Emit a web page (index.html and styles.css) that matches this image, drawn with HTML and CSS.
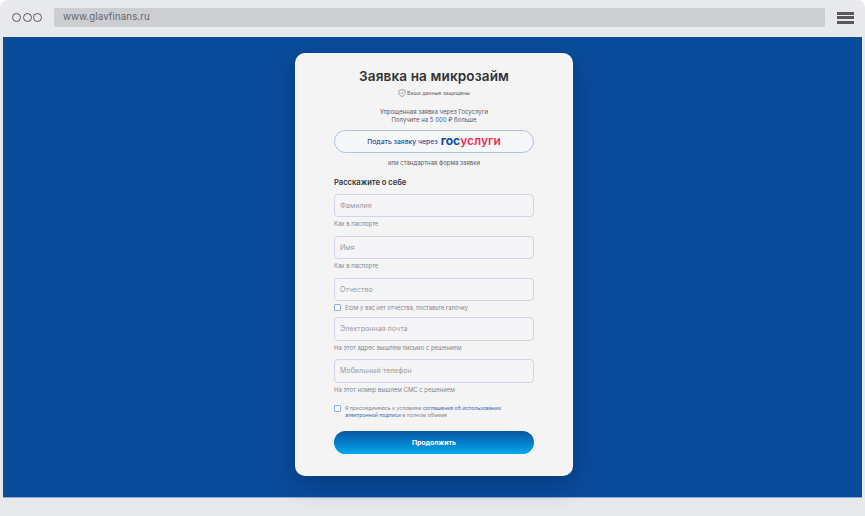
FILE: index.html
```html
<!DOCTYPE html>
<html lang="ru">
<head>
<meta charset="utf-8">
<title>Заявка на микрозайм</title>
<link rel="stylesheet" href="styles.css">
</head>
<body>
<div class="browser">
  <header class="toolbar">
    <div class="dots"><i></i><i></i><i></i></div>
    <div class="url">www.glavfinans.ru</div>
    <div class="burger"><i></i><i></i><i></i></div>
  </header>
  <main class="stage">
    <form class="card">
      <h1 class="title">Заявка на микрозайм</h1>
      <p class="secure">
        <svg class="shield" viewBox="0 0 10 10" width="8" height="8"><path d="M5 .7 8.900 2v3c0 2.300-1.700 3.600-3.900 4.400C2.800 8.600 1.100 7.300 1.100 5V2z" fill="none" stroke="#777" stroke-width=".8"/><path d="M3.400 5 4.600 6.200 6.800 3.800" fill="none" stroke="#777" stroke-width=".8"/></svg>
        Ваши данные защищены
      </p>
      <p class="promo">Упрощенная заявка через Госуслуги<br>Получите на <span class="accent">5 000 ₽</span> больше</p>
      <button class="gos" type="button">Подать заявку через <span class="logo"><span class="g1">гос</span><span class="g2">услуги</span></span></button>
      <p class="or">или стандартная форма заявки</p>
      <h2 class="section">Расскажите о себе</h2>
      <div class="field">Фамилия</div>
      <p class="hint">Как в паспорте</p>
      <div class="field">Имя</div>
      <p class="hint">Как в паспорте</p>
      <div class="field">Отчество</div>
      <label class="check first"><i class="box"></i><span>Если у вас нет отчества, поставьте галочку</span></label>
      <div class="field tall">Электронная почта</div>
      <p class="hint short">На этот адрес вышлем письмо с решением</p>
      <div class="field tall">Мобильный телефон</div>
      <p class="hint short">На этот номер вышлем СМС с решением</p>
      <label class="check agree"><i class="box"></i><span class="lines"><span class="line">Я присоединяюсь к условиям <span class="link">соглашения об использовании</span></span><span class="line"><span class="link">электронной подписи</span> в полном объеме</span></span></label>
      <button class="submit" type="button">Продолжить</button>
    </form>
  </main>
  <div class="bottom"></div>
</div>
</body>
</html>
```
FILE: styles.css
```css
* { box-sizing: border-box; }
html, body { margin: 0; height: 100%; background: #fff; }
body { font-family: Inter, "Open Sans", "Liberation Sans", sans-serif; overflow: hidden; }
p, h1, h2 { margin: 0; }

.browser { width: 865px; height: 516px; background: #e8e9ed; border-radius: 8px 8px 0 0; display: flex; flex-direction: column; }

.toolbar { height: 37px; padding: 8px 0 10px 12px; display: flex; align-items: center; flex: none; }
.dots { display: flex; gap: 1.500px; width: 42px; }
.dots i { width: 9px; height: 9px; border: 1.800px solid #58585c; border-radius: 50%; }
.url { width: 771px; height: 19px; background: #cdced2; border-radius: 2px; padding-left: 9px; font: 9.700px/18px Inter, sans-serif; color: #66676b; letter-spacing: .1px; }
.burger { margin-left: 12px; width: 17px; display: flex; flex-direction: column; gap: 1.500px; }
.burger i { height: 3px; background: #58585c; }

.stage { height: 461px; margin: 0 3px; background: #0a4c9c; padding-top: 16px; flex: none; border-bottom: 1px solid #8fabd4; }

.card { width: 278px; height: 423px; margin: 0 auto 0 292px; background: #f4f4f5; border-radius: 10px; padding: 15px 39px 0; box-shadow: 0 8px 24px rgba(5, 30, 80, .38); }

.title { font-size: 13.600px; line-height: 17px; font-weight: 600; color: #333337; text-align: center; letter-spacing: .1px; white-space: nowrap; }

.secure { display: flex; justify-content: center; align-items: center; gap: 1px; margin-top: 3px; height: 10px; font-size: 5.200px; color: #66666a; white-space: nowrap; }
.shield { flex: none; }

.promo { margin-top: 10px; font-size: 6px; line-height: 8px; color: #5a5a5f; text-align: center; white-space: nowrap; }
.accent { color: #1f5aa8; }

.gos { display: flex; align-items: center; justify-content: center; gap: 3px; width: 200px; height: 23px; margin-top: 6px; padding: 0; background: #f6f7f9; border: 1px solid #afc3e0; border-radius: 12px; font: 500 6.800px Inter, sans-serif; color: #1f4f98; white-space: nowrap; }
.logo { font-size: 12px; font-weight: 700; line-height: 12px; position: relative; top: -1px; }
.g1 { color: #0d4f9f; }
.g2 { color: #ee2f53; font-weight: 600; }

.or { margin-top: 6px; font-size: 6px; line-height: 8px; color: #5a5a5f; text-align: center; }

.section { margin-top: 11px; font-size: 7.600px; line-height: 10px; font-weight: 600; color: #333337; }

.field { height: 23px; margin-top: 6px; padding-left: 5px; border: 1px solid #d0d6e8; border-radius: 4px; background: #f5f5f7; font-size: 7.100px; line-height: 21px; color: #9a9a9f; }
.field.tall { height: 24px; margin-top: 0; line-height: 22px; }

.hint { height: 19px; padding-top: 3px; font-size: 5.950px; line-height: 7px; color: #85858a; }
.hint.short { height: 18px; }
.hint + .field { margin-top: 0; }

.check { display: flex; gap: 4px; font-size: 5.750px; line-height: 7px; color: #85858a; }
.check.first { height: 16px; padding-top: 3px; }
.box { width: 7px; height: 7px; flex: none; border: 1px solid #8fb0dc; border-radius: 1px; background: #f7f8fb; }
.first + .field { margin-top: 0; }
.agree { margin-top: 4px; height: 26px; font-size: 5.200px; line-height: 7px; }
.lines { display: flex; flex-direction: column; white-space: nowrap; }
.line { display: block; }
.link { color: #3a66a8; }

.submit { display: block; width: 200px; height: 23px; padding: 0; border: 0; border-radius: 12px; background: linear-gradient(#0a55a4, #00a8ee); color: #fff; font: 700 6.800px Inter, sans-serif; }

.bottom { flex: 1; }
```
